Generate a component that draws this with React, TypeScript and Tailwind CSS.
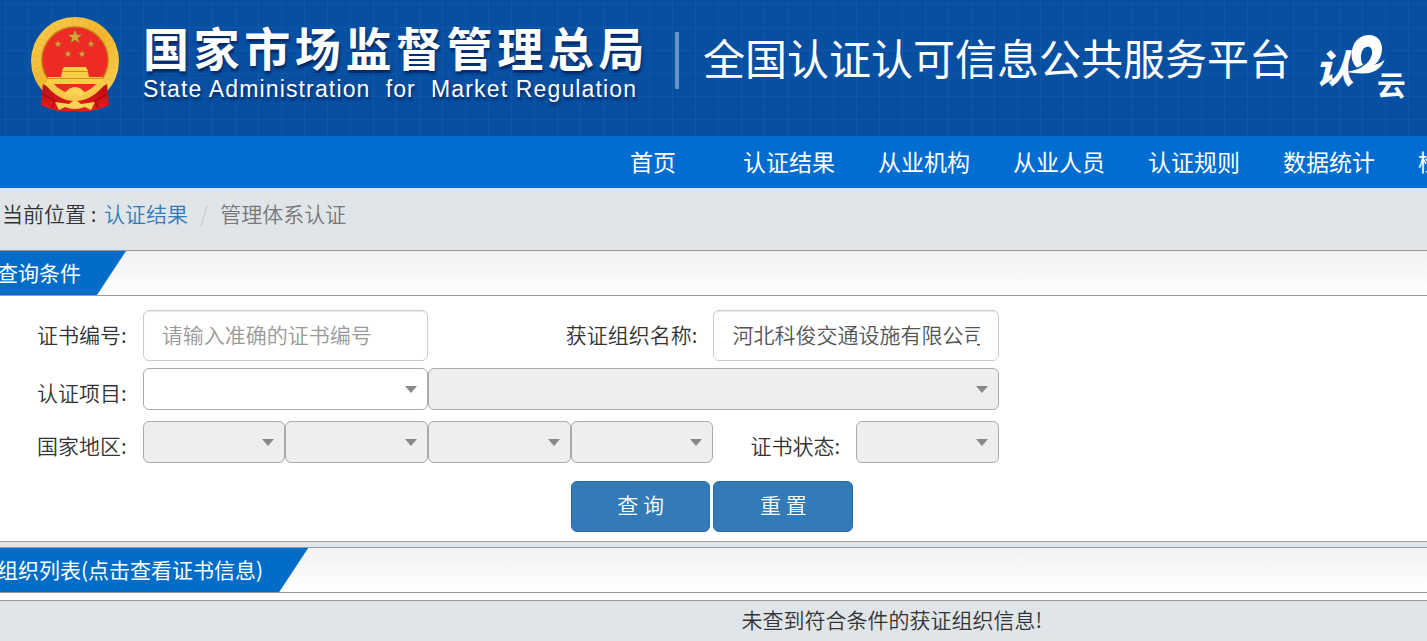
import type { ReactNode } from "react";

const navItems = ["认证结果", "从业机构", "从业人员", "认证规则", "数据统计", "检测机构"];

export default function App() {
  return (
    <div className="min-h-screen overflow-x-hidden bg-[#e0e5e9] font-['Noto_Sans_CJK_SC',sans-serif] text-[21px] font-[350] text-[#333]">
      <Header />
      <NavBar />

      <nav aria-label="当前位置" className="flex h-[62px] pl-[2px] leading-[51px]">
        <span className="mr-[3px] whitespace-pre">当前位置 : </span>
        <a href="#result" className="text-[#337ab7]">认证结果</a>
        <span className="px-[12px] text-[#ccc]">/</span>
        <span className="text-[#777]">管理体系认证</span>
      </nav>

      <main>
        <section className="border-b border-[#999] bg-white">
          <SectionTitle>查询条件</SectionTitle>
          <SearchForm />
        </section>

        <section className="mt-[5px] bg-white">
          <SectionTitle>组织列表(点击查看证书信息)</SectionTitle>
          <div className="mt-[7px] border-t border-[#999] bg-[#e0e5e9] pl-[25%] text-center leading-9">
            未查到符合条件的获证组织信息!
          </div>
        </section>
      </main>
    </div>
  );
}

function Header() {
  return (
    <header className="flex h-[136px] items-start overflow-hidden bg-[#074fa1] bg-[linear-gradient(#0e58aa_1px,transparent_1px),linear-gradient(90deg,#0e58aa_1px,transparent_1px)] bg-[size:23px_23px] bg-[position:5px_4px] pl-[31px] whitespace-nowrap text-white">
      <Emblem />

      <div className="ml-6 shrink-0 pt-5 [text-shadow:1px_3px_3px_rgba(0,20,70,0.7)]">
        <h1 className="text-[46px] leading-[52px] font-bold tracking-widest">
          国家市场监督管理总局
        </h1>
        <p className="font-['Liberation_Sans',sans-serif] text-[23px] leading-[34px] font-normal tracking-wider whitespace-pre">
          State Administration  for  Market Regulation
        </p>
      </div>

      <div className="mt-8 ml-[26px] h-[57px] w-1 shrink-0 bg-[#6593c8]" />

      <h2 className="ml-6 shrink-0 pt-[27px] text-[42px] leading-[60px] font-normal">
        全国认证认可信息公共服务平台
      </h2>

      <CloudLogo />
    </header>
  );
}

function NavBar() {
  return (
    <nav className="flex h-[52px] gap-[43px] overflow-hidden bg-[#016dd0] pl-[630px] text-[23px] leading-[50px] font-normal whitespace-nowrap text-white">
      <a href="#home" className="mr-6">首页</a>
      {navItems.map((item) => (
        <a key={item} href="#nav">{item}</a>
      ))}
    </nav>
  );
}

function SectionTitle({ children }: { children: ReactNode }) {
  return (
    <div className="flex h-[46px] border-y border-[#999] bg-linear-to-b from-[#f1f1f1] to-white">
      <h3 className="-ml-[3px] bg-[#016dc8] pr-[45px] leading-[42px] font-normal text-white [clip-path:polygon(0_0,100%_0,calc(100%-29px)_100%,0_100%)]">
        {children}
      </h3>
    </div>
  );
}

function SearchForm() {
  return (
    <form className="pt-[14px] pb-[9px]" onSubmit={(e) => e.preventDefault()}>
      <div className="mb-[7px] grid grid-cols-10 items-start">
        <Label htmlFor="certNo">证书编号:</Label>
        <TextField id="certNo" placeholder="请输入准确的证书编号" />
        <Label htmlFor="orgName" className="col-span-2">获证组织名称:</Label>
        <TextField id="orgName" defaultValue="河北科俊交通设施有限公司" />
      </div>

      <div className="mb-[2px] grid grid-cols-10 items-start">
        <Label htmlFor="project">认证项目:</Label>
        <Dropdown id="project" className="col-span-2" />
        <Dropdown label="认证项目明细" className="col-span-4" disabled />
      </div>

      <div className="mb-[9px] grid grid-cols-10 items-start">
        <Label htmlFor="country">国家地区:</Label>
        <Dropdown id="country" disabled />
        <Dropdown label="省" disabled />
        <Dropdown label="市" disabled />
        <Dropdown label="区县" disabled />
        <Label htmlFor="status">证书状态:</Label>
        <Dropdown id="status" disabled />
      </div>

      <div className="grid grid-cols-10">
        <ActionButton type="submit" className="col-start-5">查 询</ActionButton>
        <ActionButton type="reset">重 置</ActionButton>
      </div>
    </form>
  );
}

interface LabelProps {
  htmlFor: string;
  className?: string;
  children: ReactNode;
}

function Label({ htmlFor, className = "", children }: LabelProps) {
  return (
    <label
      htmlFor={htmlFor}
      className={`h-[51px] pr-4 text-right leading-[49px] whitespace-nowrap ${className}`}
    >
      {children}
    </label>
  );
}

interface TextFieldProps {
  id: string;
  placeholder?: string;
  defaultValue?: string;
}

function TextField(props: TextFieldProps) {
  return (
    <input
      type="text"
      className="col-span-2 h-[51px] w-full rounded-md border border-[#ccc] bg-white px-[18px] pb-[3px] text-[#555] shadow-[inset_0_1px_1px_rgba(0,0,0,0.075)] placeholder:text-[#999]"
      {...props}
    />
  );
}

interface DropdownProps {
  id?: string;
  label?: string;
  className?: string;
  disabled?: boolean;
}

function Dropdown({ id, label, className = "", disabled }: DropdownProps) {
  return (
    <div className={`relative ${className}`}>
      <select
        id={id}
        aria-label={label}
        disabled={disabled}
        className="block h-[42px] w-full appearance-none rounded-md border border-[#aaa] bg-white px-3 opacity-100 disabled:bg-[#eee]"
      />
      <svg
        className="pointer-events-none absolute top-[18px] right-[11px]"
        width="12"
        height="7"
        viewBox="0 0 12 7"
        fill="#888"
      >
        <path d="M0 0h12L6 7z" />
      </svg>
    </div>
  );
}

interface ActionButtonProps {
  type: "submit" | "reset";
  className?: string;
  children: ReactNode;
}

function ActionButton({ type, className = "", children }: ActionButtonProps) {
  return (
    <button
      type={type}
      className={`mr-[3px] h-[51px] rounded-md border border-[#2e6da4] bg-[#337ab7] pb-[3px] text-white ${className}`}
    >
      {children}
    </button>
  );
}

function Emblem() {
  const star = "M0-8 1.9-2.5 7.6-2.5 3 .9 4.7 6.5 0 3.1-4.7 6.5-3 .9-7.6-2.5-1.9-2.5Z";

  return (
    <svg className="mt-[17px] shrink-0" width="88" height="95" viewBox="0 0 88 95">
      <defs>
        <linearGradient id="gold" x1="0" y1="0" x2="1" y2="1">
          <stop offset="0" stopColor="#f8cf52" />
          <stop offset="0.5" stopColor="#f2b62c" />
          <stop offset="1" stopColor="#f9d45c" />
        </linearGradient>
        <linearGradient id="ribbon" x1="0" y1="0" x2="0" y2="1">
          <stop offset="0" stopColor="#b70e10" />
          <stop offset="1" stopColor="#e91d1b" />
        </linearGradient>
      </defs>
      <ellipse cx="44" cy="44" rx="44" ry="44" fill="url(#gold)" />
      <circle cx="44" cy="44" r="39" fill="none" stroke="#dc9a1d" strokeWidth="6" strokeDasharray="2 4" opacity="0.15" />
      <circle cx="44" cy="43" r="34" fill="#c78618" />
      <circle cx="44" cy="43" r="32.5" fill="#ed2a23" />
      <g fill="#d9a43b" stroke="#a25b18" strokeWidth="0.6">
        <path d={star} transform="translate(44 20)" />
        <path d={star} transform="translate(27 27) scale(.5)" />
        <path d={star} transform="translate(60 27) scale(.5)" />
        <path d={star} transform="translate(37 37) scale(.5)" />
        <path d={star} transform="translate(51 37) scale(.5)" />
      </g>
      {/* ribbons hang below the ring */}
      <path d="M12 67 27 76 61 76 76 67 78 88Q63 96 44 94Q25 96 10 88Z" fill="url(#ribbon)" />
      <path d="M13 66Q27 84 44 84Q61 84 75 66L66 66Q57 77 44 77Q31 77 22 66Z" fill="#f7c847" />
      <path d="M22 66Q31 76 44 76Q57 76 66 66Z" fill="#ed2a23" />
      <g fill="#f9cf45">
        <path d="M33 50h22l2 4H31z" />
        <path d="M31 55h26l1 5H30z" />
        <path d="M17 60h54l2 7H15z" />
      </g>
      <path d="M31 54.500h26M17 61.500h54" stroke="#d38c20" strokeWidth="1" />
      <path d="M34 76Q38 70 44 70Q50 70 54 76L50 80 44 77 38 80Z" fill="#fbd456" />
      <path d="M24 85 38 87Q44 80 50 87L64 85 60 93 54 90Q49 92 44 92Q39 92 34 90L28 93Z" fill="#fbd456" />
      <path d="M12 77 24 84 21 91M76 77 64 84 67 91" fill="none" stroke="#a80b10" strokeWidth="1.500" />
    </svg>
  );
}

function CloudLogo() {
  return (
    <svg
      className="mt-[35px] ml-6 shrink-0"
      width="91"
      height="64"
      viewBox="0 0 273 192"
      fill="white"
      role="img"
      aria-label="认e云"
    >
      <text x="0" y="145" fontSize="116" fontWeight="900" fontStyle="italic">认</text>
      <path d="M126 98C110 84 107 60 112 42C118 14 140 0 162 0C188 0 202 20 201 44C200 64 190 80 178 90C195 86 205 78 209 73C203 96 182 112 155 115C130 116 110 113 92 111C125 108 163 92 171 58C173 42 167 34 157 35C143 36 137 54 138 70C138 80 141 86 145 89Z" />
      <text x="186" y="182" fontSize="86" fontWeight="700">云</text>
    </svg>
  );
}
